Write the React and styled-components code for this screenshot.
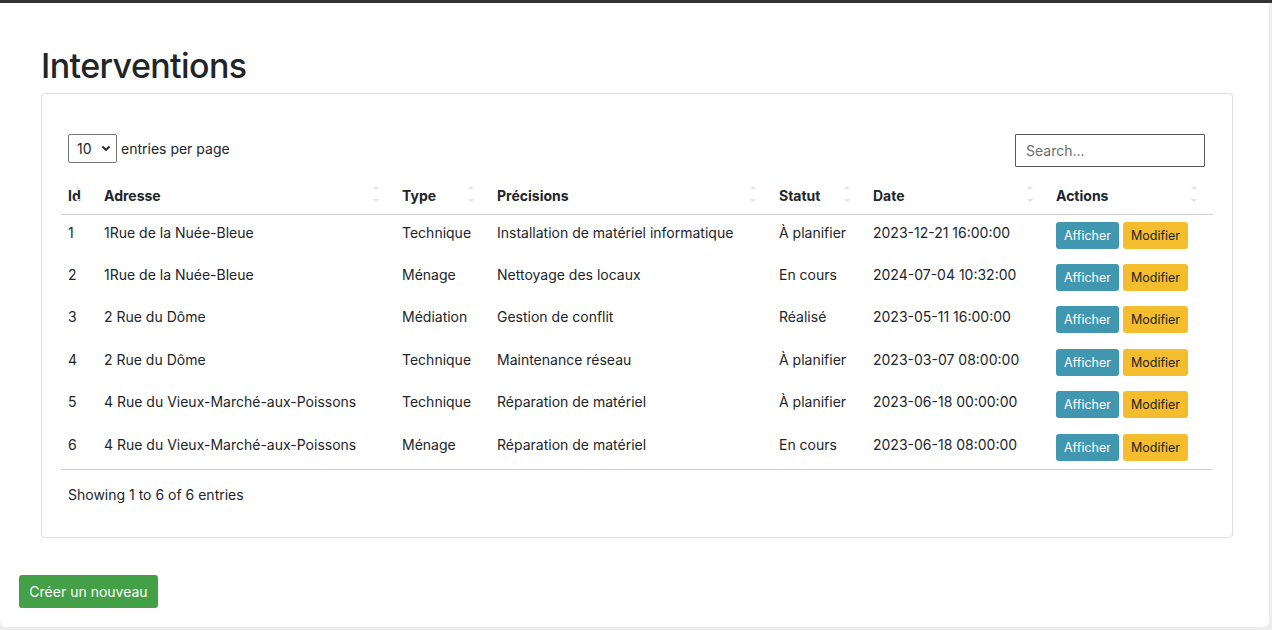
import React from 'react'
import styled, { createGlobalStyle } from 'styled-components'

const GlobalStyle = createGlobalStyle`
  * { box-sizing: border-box; }
  body {
    margin: 0;
    background: #ededed;
    font-family: Inter, "Liberation Sans", Arial, sans-serif;
    color: #212529;
  }
`

const TopBar = styled.div`
  height: 3px;
  background: #333;
`

const Panel = styled.div`
  margin-right: 3px;
  background: #fff;
  border-radius: 0 0 6px 6px;
  padding: 0 19px 19px;
  min-height: 624px;
`

const Content = styled.div`
  padding: 0 17px 0 22px;
`

const Title = styled.h1`
  margin: 0 0 6px;
  padding-top: 41px;
  font-size: 34px;
  font-weight: 500;
  line-height: 43px;
  letter-spacing: -0.6px;
`

const Card = styled.div`
  border: 1px solid #dcdfe2;
  border-radius: 4px;
  padding: 20px 19px;
`

const Controls = styled.div`
  display: flex;
  justify-content: space-between;
  align-items: flex-start;
  padding: 20px 8px 0 7px;
  font-size: 14px;
`

const PerPage = styled.label`
  display: flex;
  align-items: center;
  gap: 4px;
`

const SelectBox = styled.div`
  position: relative;
  width: 49px;
  height: 29px;
  select {
    appearance: none;
    width: 100%;
    height: 100%;
    border: 1px solid #767676;
    border-radius: 2px;
    background: #fff;
    font: inherit;
    font-size: 14px;
    color: #212529;
    padding: 0 0 0 8px;
  }
  svg {
    position: absolute;
    right: 6px;
    top: 11px;
    pointer-events: none;
  }
`

const Search = styled.input`
  width: 190px;
  height: 33px;
  border: 1px solid #5a5a5a;
  border-radius: 1px;
  padding: 0 10px;
  font: inherit;
  font-size: 14px;
  &::placeholder { color: #6c6c6c; }
`

const Table = styled.table`
  width: 100%;
  margin-top: 10px;
  border-collapse: collapse;
  table-layout: fixed;
  font-size: 14px;
`

const Th = styled.th`
  position: relative;
  text-align: left;
  font-weight: 700;
  padding: 8px 7px;
  line-height: 21px;
  border-bottom: 1px solid #cfd2d5;
`

const Sorter = styled.span`
  position: absolute;
  right: 16px;
  top: 9px;
  display: flex;
  flex-direction: column;
  gap: 10px;
  &::before, &::after {
    content: '';
    border-left: 3px solid transparent;
    border-right: 3px solid transparent;
  }
  &::before { border-bottom: 3px solid #e2e2e2; }
  &::after { border-top: 3px solid #e2e2e2; }
`

const Row = styled.tr`
  height: 42.4px;
  &:last-child td { border-bottom: 1px solid #cfd2d5; }
`

const Td = styled.td`
  padding: 7px 7px 8px;
  vertical-align: top;
  line-height: 21px;
  white-space: nowrap;
`

const Actions = styled.div`
  display: flex;
  gap: 4px;
`

const SmallButton = styled.button`
  height: 27px;
  padding: 0 8px;
  border: none;
  border-radius: 3px;
  font: inherit;
  font-size: 12.5px;
  background: ${p => (p.$variant === 'edit' ? '#f4bd2d' : '#4196b0')};
  color: ${p => (p.$variant === 'edit' ? '#212529' : '#fff')};
`

const Footer = styled.div`
  padding: 14px 7px 12px;
  font-size: 14px;
  line-height: 21px;
`

const CreateButton = styled.button`
  margin-top: 37px;
  height: 33px;
  width: 139px;
  border: none;
  border-radius: 3px;
  background: #43a047;
  color: #fff;
  font: inherit;
  font-size: 14px;
`

const columns = [
  ['Id', 36],
  ['Adresse', 298],
  ['Type', 95],
  ['Précisions', 282],
  ['Statut', 94],
  ['Date', 183],
  ['Actions', 164],
]

const rows = [
  [1, '1Rue de la Nuée-Bleue', 'Technique', 'Installation de matériel informatique', 'À planifier', '2023-12-21 16:00:00'],
  [2, '1Rue de la Nuée-Bleue', 'Ménage', 'Nettoyage des locaux', 'En cours', '2024-07-04 10:32:00'],
  [3, '2 Rue du Dôme', 'Médiation', 'Gestion de conflit', 'Réalisé', '2023-05-11 16:00:00'],
  [4, '2 Rue du Dôme', 'Technique', 'Maintenance réseau', 'À planifier', '2023-03-07 08:00:00'],
  [5, '4 Rue du Vieux-Marché-aux-Poissons', 'Technique', 'Réparation de matériel', 'À planifier', '2023-06-18 00:00:00'],
  [6, '4 Rue du Vieux-Marché-aux-Poissons', 'Ménage', 'Réparation de matériel', 'En cours', '2023-06-18 08:00:00'],
]

export default function App() {
  return (
    <>
      <GlobalStyle />
      <TopBar />
      <Panel>
        <Content>
          <Title>Interventions</Title>
          <Card>
            <Controls>
              <PerPage>
                <SelectBox>
                  <select defaultValue="10">
                    <option>5</option>
                    <option>10</option>
                    <option>15</option>
                  </select>
                  <svg width="10" height="7" viewBox="0 0 10 7">
                    <path d="M1.5 1.5 L5 5 L8.5 1.5" fill="none" stroke="#222" strokeWidth="1.8" />
                  </svg>
                </SelectBox>
                entries per page
              </PerPage>
              <Search placeholder="Search..." />
            </Controls>
            <Table>
              <colgroup>
                {columns.map(([name, w]) => <col key={name} style={{ width: w }} />)}
              </colgroup>
              <thead>
                <tr>
                  {columns.map(([name]) => (
                    <Th key={name}>{name}<Sorter /></Th>
                  ))}
                </tr>
              </thead>
              <tbody>
                {rows.map(([id, addr, type, prec, statut, date]) => (
                  <Row key={id}>
                    <Td>{id}</Td>
                    <Td>{addr}</Td>
                    <Td>{type}</Td>
                    <Td>{prec}</Td>
                    <Td>{statut}</Td>
                    <Td>{date}</Td>
                    <Td>
                      <Actions>
                        <SmallButton>Afficher</SmallButton>
                        <SmallButton $variant="edit">Modifier</SmallButton>
                      </Actions>
                    </Td>
                  </Row>
                ))}
              </tbody>
            </Table>
            <Footer>Showing 1 to 6 of 6 entries</Footer>
          </Card>
        </Content>
        <CreateButton>Créer un nouveau</CreateButton>
      </Panel>
    </>
  )
}
